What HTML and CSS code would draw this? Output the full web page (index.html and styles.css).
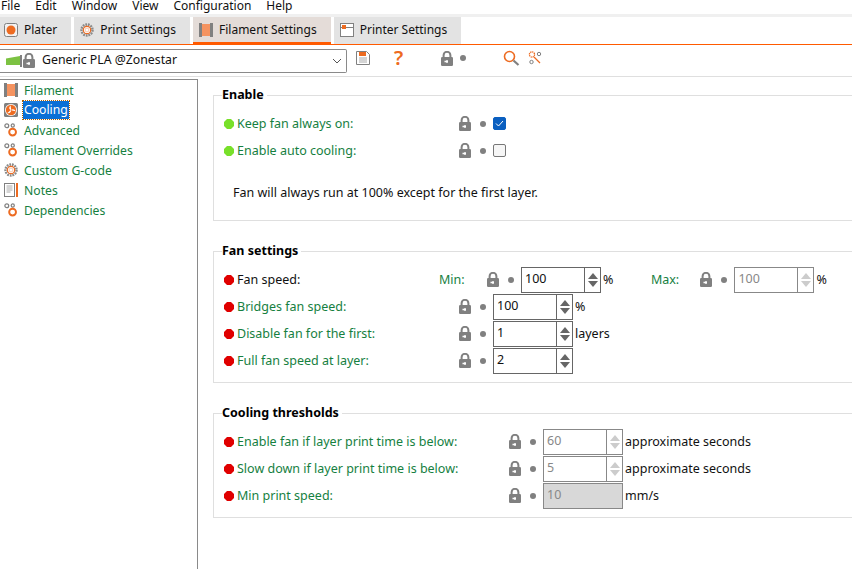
FILE: index.html
```html
<!DOCTYPE html>
<html lang="en">
<head>
    <meta charset="UTF-8">
    <meta name="viewport" content="width=device-width, initial-scale=1.0">
    <title>Filament Settings</title>
    <link rel="stylesheet" href="styles.css">
</head>
<body>
    <svg class="defs" width="0" height="0">
        <symbol id="lock" viewBox="0 0 12 15">
            <path d="M2.600 7V4.200a3.400 3.400 0 0 1 6.800 0V7" fill="none" stroke="#808080" stroke-width="2"/>
            <rect x="0" y="6" width="12" height="9" rx="1.200" fill="#808080"/>
            <path d="M3.500 10.500h3.500M6 9v3" stroke="#fff" stroke-width="1.300"/>
        </symbol>
        <symbol id="hex" viewBox="0 0 10 10">
            <path d="M3 0h4l3 3v4l-3 3H3L0 7V3z"/>
        </symbol>
        <symbol id="gear" viewBox="0 0 16 16">
            <circle cx="8" cy="8" r="6.300" fill="none" stroke="#8a8a8a" stroke-width="2.800" stroke-dasharray="2 1"/>
            <circle cx="8" cy="8" r="4.200" fill="#fff" stroke="#ed6b21" stroke-width="1.300"/>
            <circle cx="8" cy="8" r="2.200" fill="#fff" stroke="#f5b08a" stroke-width=".8"/>
        </symbol>
        <symbol id="spool" viewBox="0 0 14 14">
            <rect x="0" y="0" width="3" height="14" fill="#808080"/>
            <rect x="11" y="0" width="3" height="14" fill="#808080"/>
            <rect x="3" y="1" width="8" height="12" fill="#f59360"/>
        </symbol>
        <symbol id="cogs" viewBox="0 0 16 16">
            <circle cx="3.200" cy="3.200" r="2.200" fill="none" stroke="#808080" stroke-width="1.400"/>
            <circle cx="10" cy="2.800" r="1.800" fill="none" stroke="#808080" stroke-width="1.400"/>
            <circle cx="9.800" cy="10.400" r="3.900" fill="#fff" stroke="#ed6b21" stroke-width="2.200"/>
        </symbol>
    </svg>

    <nav class="menu">
        <span>File</span><span>Edit</span><span>Window</span><span>View</span><span>Configuration</span><span>Help</span>
    </nav>

    <div class="tabs">
        <div class="tab">
            <svg width="14" height="14" viewBox="0 0 14 14"><rect x=".5" y=".5" width="13" height="13" rx="2" fill="#f2f2f2" stroke="#808080"/><circle cx="7" cy="7" r="4.500" fill="#ed6b21"/></svg>
            Plater
        </div>
        <div class="tab">
            <svg width="14" height="14"><use href="#gear"/></svg>
            Print Settings
        </div>
        <div class="tab tab-active">
            <svg width="14" height="14"><use href="#spool"/></svg>
            Filament Settings
        </div>
        <div class="tab">
            <svg width="14" height="14" viewBox="0 0 14 14"><rect x=".5" y=".5" width="13" height="13" fill="#fff" stroke="#808080"/><path d="M1 4.500h12" stroke="#808080"/><rect x="2" y="2" width="4" height="4" fill="#ed6b21"/></svg>
            Printer Settings
        </div>
    </div>

    <div class="presets">
        <div class="combo">
            <svg class="swatch" width="14" height="9" viewBox="0 0 14 9"><path d="M0 2.500 14 0v9H0z" fill="#7cc242"/></svg>
            <svg class="bar-tick" width="2" height="12"><rect width="2" height="12" fill="#808080"/></svg>
            <svg width="12" height="15"><use href="#lock"/></svg>
            <span class="combo-text">Generic PLA @Zonestar</span>
            <svg class="chevron" width="10" height="6" viewBox="0 0 10 6"><path d="M1 1l4 4 4-4" fill="none" stroke="#555" stroke-width="1"/></svg>
        </div>
        <svg class="tool-save" width="14" height="14" viewBox="0 0 14 14"><path d="M.5.5h10l3 3v10H.5z" fill="#fff" stroke="#808080"/><rect x="3" y="1" width="7" height="4" fill="#ed6b21"/><path d="M3 7h8M3 9h8M3 11h8" stroke="#aaa"/></svg>
        <span class="tool-help">?</span>
        <svg class="tool-lock" width="12" height="15"><use href="#lock"/></svg>
        <span class="dot tool-dot"></span>
        <svg class="tool-search" width="17" height="16" viewBox="0 0 17 16"><circle cx="6.500" cy="6.500" r="5" fill="none" stroke="#ed6b21" stroke-width="1.600"/><path d="M10.500 10.500l5 4.500" stroke="#808080" stroke-width="2.200"/></svg>
        <svg class="tool-cogs" width="14" height="14" viewBox="0 0 14 14"><circle cx="4" cy="3.500" r="2.600" fill="#fff" stroke="#ed6b21" stroke-width="1.300" stroke-dasharray="1.400 .6"/><circle cx="11" cy="3" r="1.700" fill="none" stroke="#808080"/><circle cx="3.500" cy="11" r="1.700" fill="none" stroke="#808080"/><path d="M6 6l6 6" stroke="#ed6b21" stroke-width="1.300"/></svg>
    </div>

    <div class="main">
        <aside class="tree">
            <div class="tree-item"><svg width="14" height="14"><use href="#spool"/></svg><span>Filament</span></div>
            <div class="tree-item"><svg width="14" height="14" viewBox="0 0 14 14"><rect width="14" height="14" rx="1.500" fill="#808080"/><circle cx="7" cy="7" r="6" fill="#fff"/><circle cx="7" cy="7" r="5.200" fill="#ed6b21"/><path d="M7 7C5 6.500 4.600 4 6.800 2.500 6.300 4.500 7.600 5.500 7 7zM7 7c1.400-1.500 4-1 4.700 1.500C10 7.300 8.500 8 7 7zM7 7c.5 2-1.400 3.800-4 3.200C4.500 9.500 5.300 7.800 7 7z" fill="#fff"/></svg><span class="selected">Cooling</span></div>
            <div class="tree-item"><svg width="14" height="14"><use href="#cogs"/></svg><span>Advanced</span></div>
            <div class="tree-item"><svg width="14" height="14"><use href="#cogs"/></svg><span>Filament Overrides</span></div>
            <div class="tree-item"><svg width="14" height="14"><use href="#gear"/></svg><span>Custom G-code</span></div>
            <div class="tree-item"><svg width="14" height="14" viewBox="0 0 14 14"><rect x=".5" y=".5" width="10" height="13" fill="#fff" stroke="#808080"/><path d="M2.500 3h6M2.500 5h6M2.500 7h6M2.500 9h4" stroke="#aaa"/><rect x="12" y="0" width="2" height="14" fill="#ed6b21"/></svg><span>Notes</span></div>
            <div class="tree-item"><svg width="14" height="14"><use href="#cogs"/></svg><span>Dependencies</span></div>
        </aside>

        <section class="page">
            <fieldset class="group group-enable">
                <legend>Enable</legend>
                <div class="row">
                    <div class="label label-short"><svg class="hex-green" width="10" height="10"><use href="#hex"/></svg><span>Keep fan always on:</span></div>
                    <svg width="12" height="15"><use href="#lock"/></svg><span class="dot"></span>
                    <span class="check check-on"><svg width="9" height="7" viewBox="0 0 9 7"><path d="M1 3.500l2.500 2.500L8 1" fill="none" stroke="#fff" stroke-width="1"/></svg></span>
                </div>
                <div class="row">
                    <div class="label label-short"><svg class="hex-green" width="10" height="10"><use href="#hex"/></svg><span>Enable auto cooling:</span></div>
                    <svg width="12" height="15"><use href="#lock"/></svg><span class="dot"></span>
                    <span class="check"></span>
                </div>
                <p class="note">Fan will always run at 100% except for the first layer.</p>
            </fieldset>

            <fieldset class="group group-fan">
                <legend>Fan settings</legend>
                <div class="row">
                    <div class="label label-fan"><svg class="hex-red" width="10" height="10"><use href="#hex"/></svg><span class="plain">Fan speed:</span></div>
                    <span class="side side-min">Min:</span>
                    <svg width="12" height="15"><use href="#lock"/></svg><span class="dot"></span>
                    <div class="spin"><span class="val">100</span><span class="arrows"><i class="up"></i><i class="down"></i></span></div>
                    <span class="unit">%</span>
                    <span class="side side-max">Max:</span>
                    <svg width="12" height="15"><use href="#lock"/></svg><span class="dot"></span>
                    <div class="spin spin-off"><span class="val">100</span><span class="arrows"><i class="up"></i><i class="down"></i></span></div>
                    <span class="unit">%</span>
                </div>
                <div class="row">
                    <div class="label label-short"><svg class="hex-red" width="10" height="10"><use href="#hex"/></svg><span>Bridges fan speed:</span></div>
                    <svg width="12" height="15"><use href="#lock"/></svg><span class="dot"></span>
                    <div class="spin"><span class="val">100</span><span class="arrows"><i class="up"></i><i class="down"></i></span></div>
                    <span class="unit">%</span>
                </div>
                <div class="row">
                    <div class="label label-short"><svg class="hex-red" width="10" height="10"><use href="#hex"/></svg><span>Disable fan for the first:</span></div>
                    <svg width="12" height="15"><use href="#lock"/></svg><span class="dot"></span>
                    <div class="spin"><span class="val">1</span><span class="arrows"><i class="up"></i><i class="down"></i></span></div>
                    <span class="unit">layers</span>
                </div>
                <div class="row">
                    <div class="label label-short"><svg class="hex-red" width="10" height="10"><use href="#hex"/></svg><span>Full fan speed at layer:</span></div>
                    <svg width="12" height="15"><use href="#lock"/></svg><span class="dot"></span>
                    <div class="spin"><span class="val">2</span><span class="arrows"><i class="up"></i><i class="down"></i></span></div>
                </div>
            </fieldset>

            <fieldset class="group group-thresholds">
                <legend>Cooling thresholds</legend>
                <div class="row">
                    <div class="label label-long"><svg class="hex-red" width="10" height="10"><use href="#hex"/></svg><span>Enable fan if layer print time is below:</span></div>
                    <svg width="12" height="15"><use href="#lock"/></svg><span class="dot"></span>
                    <div class="spin spin-off"><span class="val">60</span><span class="arrows"><i class="up"></i><i class="down"></i></span></div>
                    <span class="unit">approximate seconds</span>
                </div>
                <div class="row">
                    <div class="label label-long"><svg class="hex-red" width="10" height="10"><use href="#hex"/></svg><span>Slow down if layer print time is below:</span></div>
                    <svg width="12" height="15"><use href="#lock"/></svg><span class="dot"></span>
                    <div class="spin spin-off"><span class="val">5</span><span class="arrows"><i class="up"></i><i class="down"></i></span></div>
                    <span class="unit">approximate seconds</span>
                </div>
                <div class="row">
                    <div class="label label-long"><svg class="hex-red" width="10" height="10"><use href="#hex"/></svg><span>Min print speed:</span></div>
                    <svg width="12" height="15"><use href="#lock"/></svg><span class="dot"></span>
                    <div class="spin spin-grey"><span class="val">10</span></div>
                    <span class="unit">mm/s</span>
                </div>
            </fieldset>
        </section>
    </div>
</body>
</html>
```

FILE: styles.css
```css
html, body {
    height: 100%;
}

body {
    margin: 0;
    background-color: #fff;
    color: #111;
    font-family: 'Noto Sans', sans-serif;
    font-size: 12.5px;
    overflow: hidden;
    display: flex;
    flex-direction: column;
}

.defs {
    position: absolute;
}

svg {
    flex: none;
    display: block;
}

.menu {
    height: 14px;
    display: flex;
    gap: 15px;
    padding-left: 1px;
    align-items: flex-start;
    font-size: 12px;
    line-height: 12px;
    border-bottom: 3px solid #f0f0f0;
}

.tabs {
    height: 27px;
    display: flex;
    gap: 3px;
    margin-left: -2px;
    border-bottom: 1px solid #ff5a00;
    font-size: 12px;
}

.tab {
    display: flex;
    align-items: center;
    gap: 6px;
    padding: 0 14px 2px 6px;
    background-color: #e3e3e3;
}

.tab-active {
    background-color: #e4dcd8;
    box-shadow: inset 0 -2px 0 #ff5a00;
}

.presets {
    height: 31px;
    display: flex;
    align-items: center;
    border-bottom: 1px solid #dfdfdf;
}

.combo {
    width: 347px;
    height: 24px;
    box-sizing: border-box;
    border: 1px solid #8a8a8a;
    border-left: none;
    border-radius: 0 2px 2px 0;
    display: flex;
    align-items: center;
    padding-left: 6px;
    font-size: 12.3px;
}

.bar-tick {
    margin-right: 1px;
}

.combo-text {
    margin-left: 7px;
    padding-bottom: 2px;
    flex: 1;
}

.chevron {
    margin-right: 4px;
}

.tool-save {
    margin-left: 9px;
    margin-top: -5px;
}

.tool-help {
    margin-left: 24px;
    width: 12px;
    color: #ed6b21;
    font-size: 20px;
    font-weight: 600;
    line-height: 20px;
    margin-top: -5px;
}

.tool-lock {
    margin-left: 35px;
    margin-top: -5px;
}

.presets .tool-dot {
    margin: -5px 0 0 7px;
}

.tool-search {
    margin-left: 37px;
    margin-top: -5px;
}

.tool-cogs {
    margin-left: 8px;
    margin-top: -5px;
}

.main {
    flex: 1;
    display: flex;
    padding-top: 2px;
    min-height: 0;
}

.tree {
    width: 197px;
    border-top: 1px solid #8a8a8a;
    border-right: 1px solid #8a8a8a;
}

.tree-item {
    height: 20px;
    display: flex;
    align-items: center;
    gap: 6px;
    padding-left: 4px;
    color: #16803f;
    font-size: 12.2px;
}

.tree-item .selected {
    background-color: #0a6fd6;
    color: #fff;
    outline: 1px dotted #b06000;
    line-height: 18px;
    padding: 0 1px;
    margin-left: -1px;
}

.page {
    flex: 1;
    padding: 9px 0 0 15px;
    min-width: 0;
}

.group {
    margin: 0 -4px 0 0;
    padding: 0 0 0 10px;
    border: 1px solid #dfdfdf;
    min-width: 0;
}

.group legend {
    font-weight: 700;
    color: #000;
    padding: 0 3px 0 0;
    margin-left: -2px;
    line-height: 14px;
}

.group-enable {
    height: 133px;
    box-sizing: border-box;
    padding-top: 8px;
}

.group-fan {
    margin-top: 23px;
    height: 139px;
    box-sizing: border-box;
    padding-top: 8px;
}

.group-thresholds {
    margin-top: 23px;
    height: 112px;
    box-sizing: border-box;
    padding-top: 8px;
}

.row {
    height: 27px;
    display: flex;
    align-items: center;
}

.label {
    display: flex;
    align-items: center;
    gap: 3px;
    color: #16803f;
    flex: none;
}

.label-short {
    width: 235px;
}

.label-long {
    width: 285px;
}

.label-fan {
    width: 215px;
}

.label .plain {
    color: #111;
}

.hex-green {
    fill: #78e02a;
}

.hex-red {
    fill: #e00000;
}

.dot {
    width: 6px;
    height: 6px;
    border-radius: 50%;
    background-color: #808080;
    margin: 0 7px 0 9px;
    flex: none;
}

.check {
    width: 13px;
    height: 13px;
    box-sizing: border-box;
    border: 1px solid #777;
    border-radius: 2px;
    background-color: #f6f6f6;
    display: flex;
    align-items: center;
    justify-content: center;
}

.check-on {
    background-color: #0a5fc0;
    border-color: #0a5fc0;
}

.note {
    margin: 21px 0 0 9px;
    line-height: 16px;
}

.spin {
    width: 80px;
    height: 26px;
    box-sizing: border-box;
    border: 1px solid #666;
    display: flex;
    flex: none;
}

.spin .val {
    flex: 1;
    padding-left: 3px;
    line-height: 21px;
    color: #111;
}

.arrows {
    width: 15px;
    border-left: 1px solid #666;
    display: flex;
    flex-direction: column;
    align-items: center;
    justify-content: center;
    gap: 2px;
}

.arrows i {
    width: 0;
    height: 0;
    border-left: 5px solid transparent;
    border-right: 5px solid transparent;
}

.arrows .up {
    border-bottom: 6px solid #666;
}

.arrows .down {
    border-top: 6px solid #666;
}

.spin-off .val {
    color: #888;
}

.spin-off .arrows i {
    border-top-color: #ccc;
    border-bottom-color: #ccc;
}

.spin-off {
    border-color: #888;
}

.spin-off .arrows {
    border-left-color: #888;
}

.spin-grey {
    background-color: #d8d8d8;
    border-color: #888;
}

.spin-grey .val {
    color: #888;
}

.unit {
    margin-left: 2px;
    color: #111;
    white-space: nowrap;
}

.side {
    color: #16803f;
    flex: none;
}

.side-min {
    width: 48px;
}

.side-max {
    width: 49.5px;
    margin-left: 37.5px;
}
```
